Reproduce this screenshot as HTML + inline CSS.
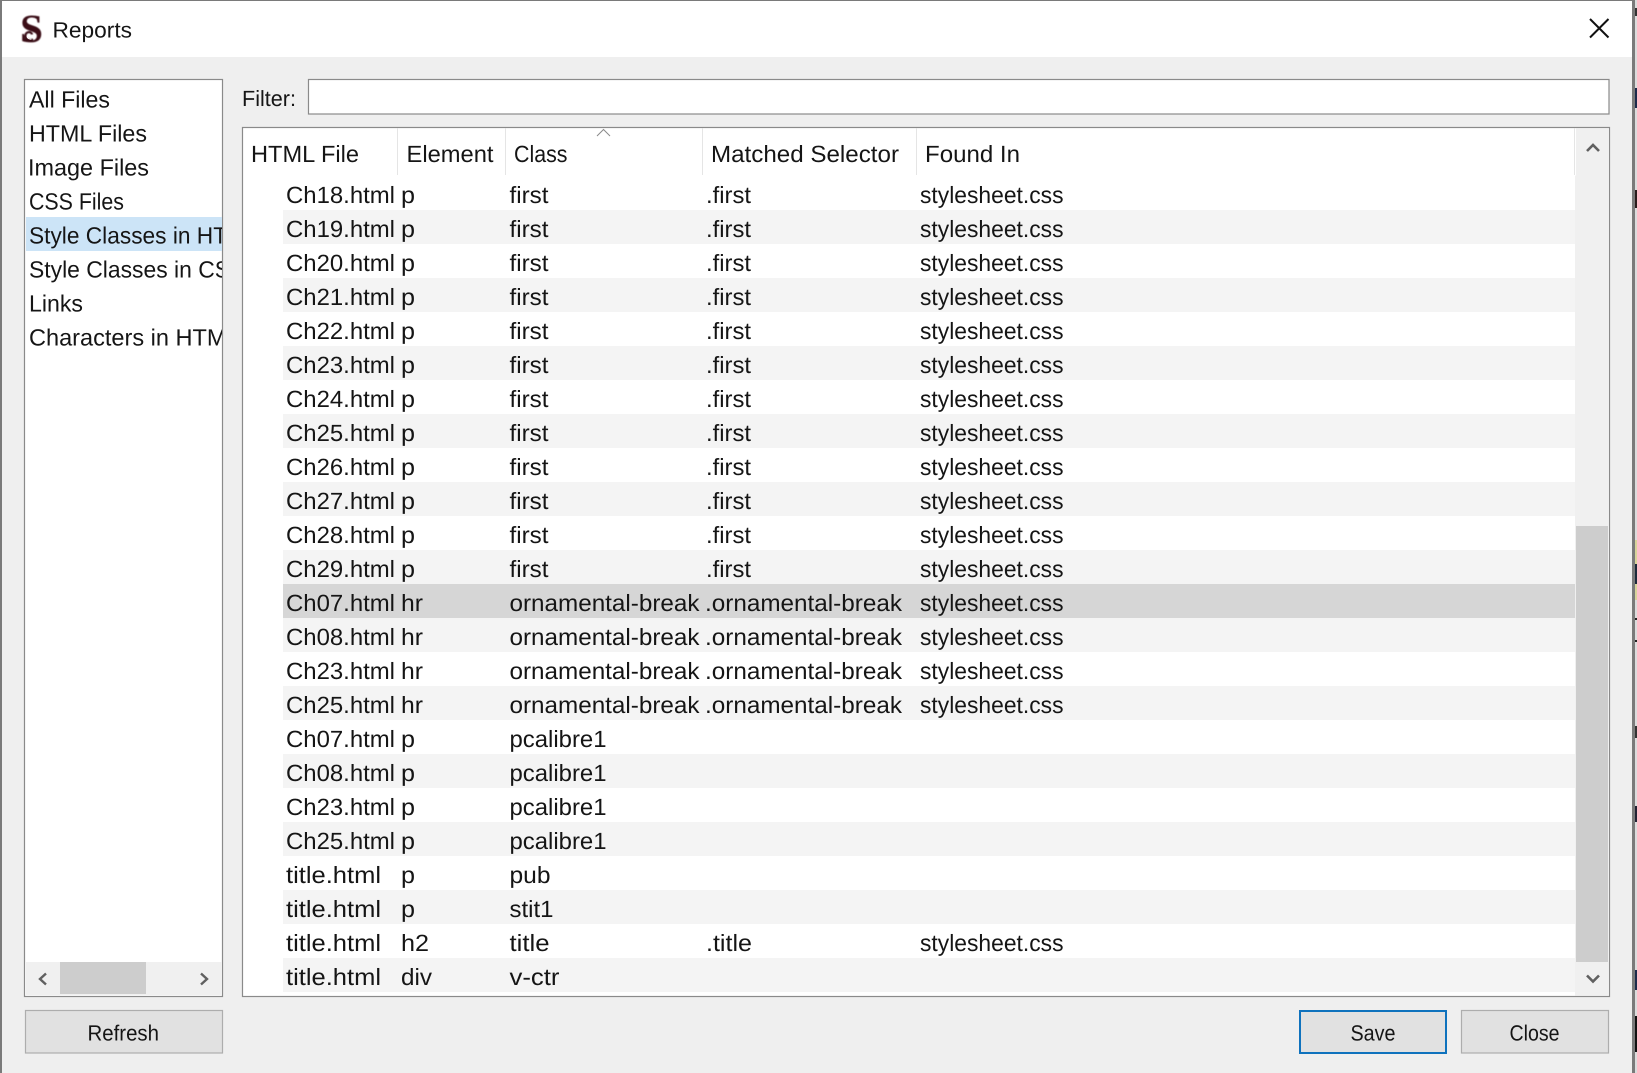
<!DOCTYPE html>
<html lang="en"><head><meta charset="utf-8"><title>Reports</title>
<style>
html,body{margin:0;padding:0;width:1637px;height:1073px;overflow:hidden;background:#ddd}
svg{display:block}
text{font-family:"Liberation Sans",sans-serif;font-size:23.5px;fill:#151515;text-rendering:geometricPrecision}
.s{font-size:22px}
</style></head><body>
<svg width="1637" height="1073" viewBox="0 0 1637 1073" xmlns="http://www.w3.org/2000/svg">
<defs>
<clipPath id="lc"><rect x="26" y="80" width="196" height="880"/></clipPath>
<filter id="b" x="-10%" y="-10%" width="120%" height="120%"><feGaussianBlur stdDeviation="0.4"/></filter>
</defs>
<!-- outside desktop -->
<rect width="1637" height="1073" fill="#dcdcdc"/>
<rect x="1635" y="8" width="2" height="8" fill="#333"/>
<rect x="1633" y="88" width="4" height="20" fill="#1c2a4a"/>
<rect x="1633" y="190" width="4" height="18" fill="#2a1c1c"/>
<rect x="1635" y="540" width="2" height="60" fill="#d8d49a"/>
<rect x="1633" y="564" width="4" height="20" fill="#1c2a3a"/>
<rect x="1633" y="618" width="4" height="2" fill="#222"/>
<rect x="1633" y="640" width="4" height="2" fill="#222"/>
<rect x="1633" y="726" width="4" height="12" fill="#333"/>
<rect x="1633" y="806" width="4" height="16" fill="#223"/>
<rect x="1633" y="970" width="4" height="20" fill="#1c2a4a"/>
<rect x="1633" y="1016" width="4" height="36" fill="#111"/>
<!-- dialog -->
<rect x="0" y="0" width="1635" height="1073" fill="#7a7a7a"/>
<rect x="2" y="1" width="1630" height="1072" fill="#efefef"/>
<rect x="2" y="1" width="1630" height="56" fill="#fff"/>
<!-- title -->
<g filter="url(#b)">
<text x="20" y="42" textLength="23" lengthAdjust="spacingAndGlyphs" style="font-family:'Liberation Serif',serif;font-size:40px;font-weight:bold;fill:#3a0d18">S</text>
<path d="M33 39.500c-4.500 1.500-8-1-7.500-4.500 .5-3.500 6-4 6.500-.5" fill="none" stroke="#3a0d18" stroke-width="2.200"/>
</g>
<path d="M31.500 39c-3 .5-4.800-1.500-4-3.500" fill="none" stroke="#fff" stroke-width="1"/>
<text class="s" x="52.500" y="37.500" textLength="79.500" lengthAdjust="spacingAndGlyphs">Reports</text>
<path d="M1590 19L1608.500 37.500M1608.500 19L1590 37.500" stroke="#111" stroke-width="2" fill="none"/>
<!-- left list -->
<rect x="24.500" y="79.500" width="198" height="917" fill="#fff" stroke="#8a8a8a" stroke-width="1.200"/>
<rect x="26" y="217" width="196" height="34" fill="#cce4f7"/>
<g clip-path="url(#lc)">
<text x="29" y="107.500" textLength="81" lengthAdjust="spacingAndGlyphs">All Files</text>
<text x="29" y="141.500" textLength="118" lengthAdjust="spacingAndGlyphs">HTML Files</text>
<text x="28" y="175.500" textLength="121" lengthAdjust="spacingAndGlyphs">Image Files</text>
<text x="29" y="209.500" textLength="95" lengthAdjust="spacingAndGlyphs">CSS Files</text>
<text x="29" y="243.500" textLength="283" lengthAdjust="spacingAndGlyphs">Style Classes in HTML Files</text>
<text x="29" y="277.500" textLength="271" lengthAdjust="spacingAndGlyphs">Style Classes in CSS Files</text>
<text x="29" y="311.500" textLength="54" lengthAdjust="spacingAndGlyphs">Links</text>
<text x="29" y="345.500" textLength="266" lengthAdjust="spacingAndGlyphs">Characters in HTML Files</text>
</g>
<rect x="26" y="962" width="196" height="33" fill="#f0f0f0"/>
<rect x="60" y="962" width="86" height="32" fill="#cdcdcd"/>
<path d="M46 973.500L40 979L46 984.500M201 973.500L207 979L201 984.500" fill="none" stroke="#606060" stroke-width="2.400"/>
<!-- filter -->
<text class="s" x="242" y="106" textLength="54" lengthAdjust="spacingAndGlyphs">Filter:</text>
<rect x="308.500" y="79.500" width="1300.500" height="34.500" fill="#fff" stroke="#8a8a8a" stroke-width="1.200"/>
<!-- table -->
<rect x="242.500" y="127.500" width="1367" height="869" fill="#fff" stroke="#8a8a8a" stroke-width="1.200"/>
<rect x="1575" y="128.500" width="34" height="867" fill="#f0f0f0"/>
<rect x="1575" y="128.500" width="1" height="47" fill="#fff"/>
<rect x="1576" y="526" width="32" height="436" fill="#cdcdcd"/>
<path d="M1587 151L1593 145L1599 151M1587 975.500L1593 981.500L1599 975.500" fill="none" stroke="#606060" stroke-width="2.600"/>
<g fill="#e5e5e5">
<rect x="397" y="128" width="1" height="47"/><rect x="505" y="128" width="1" height="47"/><rect x="702" y="128" width="1" height="47"/><rect x="916" y="128" width="1" height="47"/><rect x="1574" y="128" width="1" height="47"/>
</g>
<path d="M597 136L603.500 129.500L610 136" fill="none" stroke="#8a8a8a" stroke-width="1"/>
<text x="251" y="162" textLength="108" lengthAdjust="spacingAndGlyphs">HTML File</text>
<text x="406.500" y="162" textLength="87" lengthAdjust="spacingAndGlyphs">Element</text>
<text x="514" y="162" textLength="53.500" lengthAdjust="spacingAndGlyphs">Class</text>
<text x="711" y="162" textLength="188" lengthAdjust="spacingAndGlyphs">Matched Selector</text>
<text x="925" y="162" textLength="95" lengthAdjust="spacingAndGlyphs">Found In</text>
<!-- row backgrounds -->
<g fill="#f4f4f4">
<rect x="283" y="210" width="1292" height="34"/><rect x="283" y="278" width="1292" height="34"/><rect x="283" y="346" width="1292" height="34"/><rect x="283" y="414" width="1292" height="34"/><rect x="283" y="482" width="1292" height="34"/><rect x="283" y="550" width="1292" height="34"/><rect x="283" y="618" width="1292" height="34"/><rect x="283" y="686" width="1292" height="34"/><rect x="283" y="754" width="1292" height="34"/><rect x="283" y="822" width="1292" height="34"/><rect x="283" y="890" width="1292" height="34"/><rect x="283" y="958" width="1292" height="34"/>
</g>
<rect x="283" y="584" width="1292" height="34" fill="#d6d6d6"/>
<!-- rows -->
<g>
<text x="286" y="203" textLength="109" lengthAdjust="spacingAndGlyphs">Ch18.html</text><text x="401" y="203" textLength="14" lengthAdjust="spacingAndGlyphs">p</text><text x="509.500" y="203" textLength="39" lengthAdjust="spacingAndGlyphs">first</text><text x="706" y="203" textLength="45" lengthAdjust="spacingAndGlyphs">.first</text><text x="920" y="203" textLength="143.500" lengthAdjust="spacingAndGlyphs">stylesheet.css</text>
<text x="286" y="237" textLength="109" lengthAdjust="spacingAndGlyphs">Ch19.html</text><text x="401" y="237" textLength="14" lengthAdjust="spacingAndGlyphs">p</text><text x="509.500" y="237" textLength="39" lengthAdjust="spacingAndGlyphs">first</text><text x="706" y="237" textLength="45" lengthAdjust="spacingAndGlyphs">.first</text><text x="920" y="237" textLength="143.500" lengthAdjust="spacingAndGlyphs">stylesheet.css</text>
<text x="286" y="271" textLength="109" lengthAdjust="spacingAndGlyphs">Ch20.html</text><text x="401" y="271" textLength="14" lengthAdjust="spacingAndGlyphs">p</text><text x="509.500" y="271" textLength="39" lengthAdjust="spacingAndGlyphs">first</text><text x="706" y="271" textLength="45" lengthAdjust="spacingAndGlyphs">.first</text><text x="920" y="271" textLength="143.500" lengthAdjust="spacingAndGlyphs">stylesheet.css</text>
<text x="286" y="305" textLength="109" lengthAdjust="spacingAndGlyphs">Ch21.html</text><text x="401" y="305" textLength="14" lengthAdjust="spacingAndGlyphs">p</text><text x="509.500" y="305" textLength="39" lengthAdjust="spacingAndGlyphs">first</text><text x="706" y="305" textLength="45" lengthAdjust="spacingAndGlyphs">.first</text><text x="920" y="305" textLength="143.500" lengthAdjust="spacingAndGlyphs">stylesheet.css</text>
<text x="286" y="339" textLength="109" lengthAdjust="spacingAndGlyphs">Ch22.html</text><text x="401" y="339" textLength="14" lengthAdjust="spacingAndGlyphs">p</text><text x="509.500" y="339" textLength="39" lengthAdjust="spacingAndGlyphs">first</text><text x="706" y="339" textLength="45" lengthAdjust="spacingAndGlyphs">.first</text><text x="920" y="339" textLength="143.500" lengthAdjust="spacingAndGlyphs">stylesheet.css</text>
<text x="286" y="373" textLength="109" lengthAdjust="spacingAndGlyphs">Ch23.html</text><text x="401" y="373" textLength="14" lengthAdjust="spacingAndGlyphs">p</text><text x="509.500" y="373" textLength="39" lengthAdjust="spacingAndGlyphs">first</text><text x="706" y="373" textLength="45" lengthAdjust="spacingAndGlyphs">.first</text><text x="920" y="373" textLength="143.500" lengthAdjust="spacingAndGlyphs">stylesheet.css</text>
<text x="286" y="407" textLength="109" lengthAdjust="spacingAndGlyphs">Ch24.html</text><text x="401" y="407" textLength="14" lengthAdjust="spacingAndGlyphs">p</text><text x="509.500" y="407" textLength="39" lengthAdjust="spacingAndGlyphs">first</text><text x="706" y="407" textLength="45" lengthAdjust="spacingAndGlyphs">.first</text><text x="920" y="407" textLength="143.500" lengthAdjust="spacingAndGlyphs">stylesheet.css</text>
<text x="286" y="441" textLength="109" lengthAdjust="spacingAndGlyphs">Ch25.html</text><text x="401" y="441" textLength="14" lengthAdjust="spacingAndGlyphs">p</text><text x="509.500" y="441" textLength="39" lengthAdjust="spacingAndGlyphs">first</text><text x="706" y="441" textLength="45" lengthAdjust="spacingAndGlyphs">.first</text><text x="920" y="441" textLength="143.500" lengthAdjust="spacingAndGlyphs">stylesheet.css</text>
<text x="286" y="475" textLength="109" lengthAdjust="spacingAndGlyphs">Ch26.html</text><text x="401" y="475" textLength="14" lengthAdjust="spacingAndGlyphs">p</text><text x="509.500" y="475" textLength="39" lengthAdjust="spacingAndGlyphs">first</text><text x="706" y="475" textLength="45" lengthAdjust="spacingAndGlyphs">.first</text><text x="920" y="475" textLength="143.500" lengthAdjust="spacingAndGlyphs">stylesheet.css</text>
<text x="286" y="509" textLength="109" lengthAdjust="spacingAndGlyphs">Ch27.html</text><text x="401" y="509" textLength="14" lengthAdjust="spacingAndGlyphs">p</text><text x="509.500" y="509" textLength="39" lengthAdjust="spacingAndGlyphs">first</text><text x="706" y="509" textLength="45" lengthAdjust="spacingAndGlyphs">.first</text><text x="920" y="509" textLength="143.500" lengthAdjust="spacingAndGlyphs">stylesheet.css</text>
<text x="286" y="543" textLength="109" lengthAdjust="spacingAndGlyphs">Ch28.html</text><text x="401" y="543" textLength="14" lengthAdjust="spacingAndGlyphs">p</text><text x="509.500" y="543" textLength="39" lengthAdjust="spacingAndGlyphs">first</text><text x="706" y="543" textLength="45" lengthAdjust="spacingAndGlyphs">.first</text><text x="920" y="543" textLength="143.500" lengthAdjust="spacingAndGlyphs">stylesheet.css</text>
<text x="286" y="577" textLength="109" lengthAdjust="spacingAndGlyphs">Ch29.html</text><text x="401" y="577" textLength="14" lengthAdjust="spacingAndGlyphs">p</text><text x="509.500" y="577" textLength="39" lengthAdjust="spacingAndGlyphs">first</text><text x="706" y="577" textLength="45" lengthAdjust="spacingAndGlyphs">.first</text><text x="920" y="577" textLength="143.500" lengthAdjust="spacingAndGlyphs">stylesheet.css</text>
<text x="286" y="611" textLength="109" lengthAdjust="spacingAndGlyphs">Ch07.html</text><text x="401" y="611" textLength="22" lengthAdjust="spacingAndGlyphs">hr</text><text x="509.500" y="611" textLength="190" lengthAdjust="spacingAndGlyphs">ornamental-break</text><text x="705" y="611" textLength="197" lengthAdjust="spacingAndGlyphs">.ornamental-break</text><text x="920" y="611" textLength="143.500" lengthAdjust="spacingAndGlyphs">stylesheet.css</text>
<text x="286" y="645" textLength="109" lengthAdjust="spacingAndGlyphs">Ch08.html</text><text x="401" y="645" textLength="22" lengthAdjust="spacingAndGlyphs">hr</text><text x="509.500" y="645" textLength="190" lengthAdjust="spacingAndGlyphs">ornamental-break</text><text x="705" y="645" textLength="197" lengthAdjust="spacingAndGlyphs">.ornamental-break</text><text x="920" y="645" textLength="143.500" lengthAdjust="spacingAndGlyphs">stylesheet.css</text>
<text x="286" y="679" textLength="109" lengthAdjust="spacingAndGlyphs">Ch23.html</text><text x="401" y="679" textLength="22" lengthAdjust="spacingAndGlyphs">hr</text><text x="509.500" y="679" textLength="190" lengthAdjust="spacingAndGlyphs">ornamental-break</text><text x="705" y="679" textLength="197" lengthAdjust="spacingAndGlyphs">.ornamental-break</text><text x="920" y="679" textLength="143.500" lengthAdjust="spacingAndGlyphs">stylesheet.css</text>
<text x="286" y="713" textLength="109" lengthAdjust="spacingAndGlyphs">Ch25.html</text><text x="401" y="713" textLength="22" lengthAdjust="spacingAndGlyphs">hr</text><text x="509.500" y="713" textLength="190" lengthAdjust="spacingAndGlyphs">ornamental-break</text><text x="705" y="713" textLength="197" lengthAdjust="spacingAndGlyphs">.ornamental-break</text><text x="920" y="713" textLength="143.500" lengthAdjust="spacingAndGlyphs">stylesheet.css</text>
<text x="286" y="747" textLength="109" lengthAdjust="spacingAndGlyphs">Ch07.html</text><text x="401" y="747" textLength="14" lengthAdjust="spacingAndGlyphs">p</text><text x="509.500" y="747" textLength="97" lengthAdjust="spacingAndGlyphs">pcalibre1</text>
<text x="286" y="781" textLength="109" lengthAdjust="spacingAndGlyphs">Ch08.html</text><text x="401" y="781" textLength="14" lengthAdjust="spacingAndGlyphs">p</text><text x="509.500" y="781" textLength="97" lengthAdjust="spacingAndGlyphs">pcalibre1</text>
<text x="286" y="815" textLength="109" lengthAdjust="spacingAndGlyphs">Ch23.html</text><text x="401" y="815" textLength="14" lengthAdjust="spacingAndGlyphs">p</text><text x="509.500" y="815" textLength="97" lengthAdjust="spacingAndGlyphs">pcalibre1</text>
<text x="286" y="849" textLength="109" lengthAdjust="spacingAndGlyphs">Ch25.html</text><text x="401" y="849" textLength="14" lengthAdjust="spacingAndGlyphs">p</text><text x="509.500" y="849" textLength="97" lengthAdjust="spacingAndGlyphs">pcalibre1</text>
<text x="286" y="883" textLength="95" lengthAdjust="spacingAndGlyphs">title.html</text><text x="401" y="883" textLength="14" lengthAdjust="spacingAndGlyphs">p</text><text x="509.500" y="883" textLength="41" lengthAdjust="spacingAndGlyphs">pub</text>
<text x="286" y="917" textLength="95" lengthAdjust="spacingAndGlyphs">title.html</text><text x="401" y="917" textLength="14" lengthAdjust="spacingAndGlyphs">p</text><text x="509.500" y="917" textLength="44" lengthAdjust="spacingAndGlyphs">stit1</text>
<text x="286" y="951" textLength="95" lengthAdjust="spacingAndGlyphs">title.html</text><text x="401" y="951" textLength="28" lengthAdjust="spacingAndGlyphs">h2</text><text x="509.500" y="951" textLength="40" lengthAdjust="spacingAndGlyphs">title</text><text x="706" y="951" textLength="46" lengthAdjust="spacingAndGlyphs">.title</text><text x="920" y="951" textLength="143.500" lengthAdjust="spacingAndGlyphs">stylesheet.css</text>
<text x="286" y="985" textLength="95" lengthAdjust="spacingAndGlyphs">title.html</text><text x="401" y="985" textLength="31" lengthAdjust="spacingAndGlyphs">div</text><text x="509.500" y="985" textLength="50" lengthAdjust="spacingAndGlyphs">v-ctr</text>
</g>
<!-- buttons -->
<rect x="25.500" y="1010.500" width="197" height="42.500" fill="#e1e1e1" stroke="#adadad" stroke-width="1.200"/>
<text class="s" x="87.500" y="1040.500" textLength="71.500" lengthAdjust="spacingAndGlyphs">Refresh</text>
<rect x="1300" y="1011" width="146" height="42" fill="#e1e1e1" stroke="#0f72bd" stroke-width="2"/>
<text class="s" x="1350.500" y="1040.500" textLength="45" lengthAdjust="spacingAndGlyphs">Save</text>
<rect x="1461.500" y="1010.500" width="147" height="42.500" fill="#e1e1e1" stroke="#adadad" stroke-width="1.200"/>
<text class="s" x="1509.500" y="1040.500" textLength="50" lengthAdjust="spacingAndGlyphs">Close</text>
</svg>
</body></html>
